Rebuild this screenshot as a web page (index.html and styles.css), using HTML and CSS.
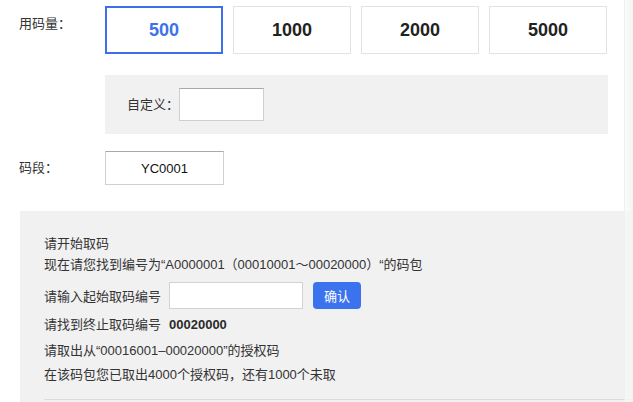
FILE: index.html
```html
<!DOCTYPE html>
<html lang="zh-CN">
<head>
  <meta charset="UTF-8">
  <title>取码</title>
  <link rel="stylesheet" href="styles.css">
</head>
<body>
  <div class="form-row amount-row">
    <div class="row-label">用码量：</div>
    <div class="amount-options">
      <button class="amount-btn active">500</button>
      <button class="amount-btn">1000</button>
      <button class="amount-btn">2000</button>
      <button class="amount-btn">5000</button>
    </div>
  </div>

  <div class="custom-box">
    <label for="customAmount">自定义：</label>
    <input type="text" id="customAmount" class="custom-input">
  </div>

  <div class="form-row segment-row">
    <div class="row-label">码段：</div>
    <input type="text" class="segment-input" value="YC0001">
  </div>

  <div class="fetch-box">
    <p class="line">请开始取码</p>
    <p class="line">现在请您找到编号为“A0000001（00010001～00020000）“的码包</p>
    <div class="input-line">
      <span class="field-label">请输入起始取码编号</span>
      <input type="text" class="start-input">
      <button class="confirm-btn">确认</button>
    </div>
    <p class="line end-line"><span class="field-label">请找到终止取码编号</span><span class="end-number">00020000</span></p>
    <p class="line range-line">请取出从“00016001–00020000”的授权码</p>
    <p class="line count-line">在该码包您已取出4000个授权码，还有1000个未取</p>
    <div class="divider"></div>
  </div>

  <div class="edge-shade"></div>
</body>
</html>
```

FILE: styles.css
```css
* { margin: 0; padding: 0; box-sizing: border-box; }
body {
  font-family: "Liberation Sans", "Noto Sans CJK SC", sans-serif;
  font-size: 13px;
  color: #333;
  background: #fff;
  width: 633px;
  height: 402px;
  overflow: hidden;
  position: relative;
}

/* rows */
.form-row {
  display: flex;
  align-items: flex-start;
}
.row-label {
  width: 105px;
  padding-left: 19px;
  line-height: 20px;
}
.amount-row { padding-top: 6px; }
.amount-row .row-label { padding-top: 8px; }
.amount-options {
  display: flex;
  gap: 10px;
}
.amount-btn {
  width: 118px;
  height: 48px;
  background: #fff;
  border: 1px solid #e3e3e3;
  font-family: "Liberation Sans", sans-serif;
  font-size: 18px;
  font-weight: bold;
  color: #222;
  cursor: pointer;
}
.amount-btn.active {
  border: 2px solid #3d6fe6;
  color: #3d72ee;
}

/* custom amount */
.custom-box {
  margin: 21px 0 0 105px;
  width: 503px;
  height: 59px;
  background: #f1f1f1;
  display: flex;
  align-items: center;
  padding-left: 22px;
}
.custom-box label { line-height: 20px; }
.custom-input {
  width: 85px;
  height: 33px;
  border: 1px solid #cfcfcf;
  border-top-color: #a9a9a9;
  background: #fff;
}

/* segment */
.segment-row {
  margin-top: 17px;
  align-items: center;
}
.segment-input {
  width: 119px;
  height: 34px;
  border: 1px solid #d0d0d0;
  border-top-color: #a9a9a9;
  text-align: center;
  font-family: "Liberation Sans", sans-serif;
  font-size: 13px;
  color: #111;
}

/* fetch panel */
.fetch-box {
  margin: 26px 0 0 20px;
  height: 200px;
  background: #f1f1f1;
  padding: 22px 0 0 24px;
}
.line { line-height: 21px; }
.field-label {
  display: inline-block;
  width: 125px;
}
.input-line {
  display: flex;
  align-items: center;
  margin-top: 7px;
  height: 27px;
}
.start-input {
  width: 134px;
  height: 27px;
  border: 1px solid #d3d3d3;
  background: #fff;
}
.confirm-btn {
  margin-left: 10px;
  width: 48px;
  height: 27px;
  border: none;
  border-radius: 4px;
  background: #3b73ef;
  color: #fff;
  font-family: "Noto Sans CJK SC", sans-serif;
  font-size: 13px;
}
.end-line { margin-top: 5px; }
.end-number { font-weight: bold; color: #2a2a2a; }
.range-line { margin-top: 5px; }
.count-line { margin-top: 3px; }
.divider {
  margin-top: 14px;
  border-top: 1px solid #dcdcdc;
}

/* faint scrollbar edge on the right */
.edge-shade {
  position: absolute;
  top: 0;
  right: 0;
  width: 9px;
  height: 100%;
  background: linear-gradient(to right, rgba(250,250,250,0.6), #f4f4f4);
  border-left: 1px solid #f0f0f0;
}
```
